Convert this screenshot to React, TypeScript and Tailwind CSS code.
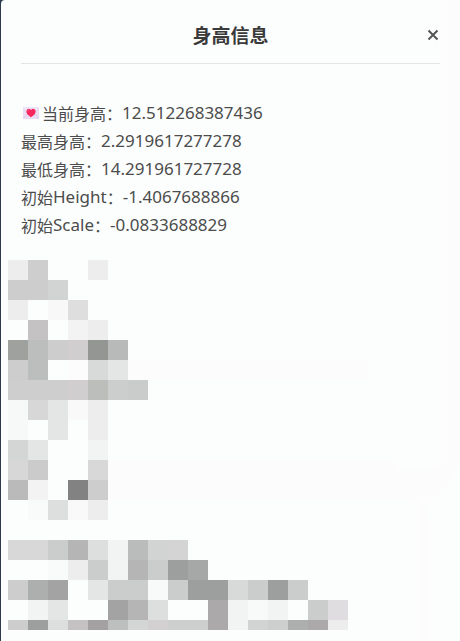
type Reading = { label: string; latin?: string; value: string; icon?: boolean };

const readings: Reading[] = [
  { label: "当前身高", value: "12.512268387436", icon: true },
  { label: "最高身高", value: "2.2919617277278" },
  { label: "最低身高", value: "14.291961727728" },
  { label: "初始", latin: "Height", value: "-1.4067688866" },
  { label: "初始", latin: "Scale", value: "-0.0833688829" },
];

// Each row lists its cell colours from left to right; a dot is an empty cell.
const upperRows = [
  "ecedec cdcecd . . ecedec",
  "cccdcc cccdcc d2d4d3",
  "ecedec . f7f8f7 dddedd",
  ". c4c2c3 . f2f3f2 ecedec",
  "9fa19f bcbebd cccdcc d0cecf 949694 b8bab9",
  "cccdcc bcbebd . fdfcfd d8dad9 e4e6e5",
  "cdcecd cdcecd cdcecd d0cecf bcbebc cccecd cacccb",
  "f7f9f8 d8d7d8 e4e6e5 f8f9f8 ecedec",
  "f7f9f8 . e4e6e5 . ecedec",
  "d4d6d5 e4e6e5 . . f2f4f3",
  "d8d7d8 cbcbcb . . d8d8d8",
  "bababa f3f3f3 . 828282 cdcdcd",
  ". f9fbfa dddfde f8f9f8 ecedec",
];

const lowerRows = [
  "d8d8d8 d8d8d8 cbcdcc b5b5b5 dddfde f2f4f3 babcbb d2d4d3 d4d4d4",
  ". . f9fbfa ecedec cbcdcc f2f4f3 b5b5b5 cbcdcc 9d9f9e a6a8a7",
  "cdcdcd adafae a3a3a3 . e4e6e5 cbcdcc cbcdcc f8faf9 cbcdcc 9d9f9e 9d9f9e d8dad9 cbcdcc 9d9f9e cbcdcc",
  ". f2f4f3 e4e6e5 . . a3a3a3 b5b5b5 dddfde . . aba9aa f2f4f3 f8faf9 f2f4f3 . cbcdcc dfdddf",
  "cdcdcd 9d9f9e dddfde c4c2c3 a3a1a2 bdbfbe d4d6d5 d2d0d1 cdcfce cdcfce aba9aa f2f4f3 d2d4d3 cdcfce adafae aba9aa ecedec",
];

function Mosaic({ rows, shortLast = false }: { rows: string[]; shortLast?: boolean }) {
  return (
    <div aria-hidden="true">
      {rows.map((row, r) => (
        <div key={r} className={shortLast && r === rows.length - 1 ? "flex h-2.5" : "flex h-5"}>
          {row.split(" ").map((c, i) => (
            <div
              key={i}
              className="w-5 shrink-0"
              style={{ backgroundColor: c === "." ? "transparent" : `#${c}` }}
            />
          ))}
        </div>
      ))}
    </div>
  );
}

function LoveLetter() {
  return (
    <svg width="16" height="12" viewBox="0 0 16 12" className="mr-[3px] ml-0.5 inline-block" aria-hidden="true">
      <rect width="16" height="12" rx="1" fill="#e9dcf3" />
      <path d="M0 0H16L8 8Z" fill="#eee6f8" />
      <path d="M0 11.5 5 7M16 11.5 11 7" stroke="#d9c7e8" strokeWidth=".7" />
      <path d="M8 10.2C5 8.2 3.4 6.5 3.4 4.4C3.4 1.6 6.6 1 8 2.9C9.4 1 12.6 1.6 12.6 4.4C12.6 6.5 11 8.2 8 10.2Z" fill="#f8285f" />
      <path d="M4.7 4.2Q5 3 6.2 2.9" stroke="#ff6b91" strokeWidth=".8" fill="none" />
    </svg>
  );
}

// Very faint outline of the cards that lie under the translucent sheet.
function Undertone() {
  return (
    <svg
      className="pointer-events-none absolute top-0 right-0"
      width="459"
      height="641"
      viewBox="0 0 459 641"
      fill="#fdfcfd"
      aria-hidden="true"
    >
      <path d="M440 0H459V465Q445 495 425 503H418Q410 500 396 500H107V460H396V470H425Q440 470 440 455Z" />
      <path d="M418 503H425Q429 520 429 545V641H418Z" />
      <path d="M127 360H367V380H127Z" />
    </svg>
  );
}

export default function App() {
  return (
    <div className="min-h-screen bg-[#2d3a4b] pl-px font-['Noto_Sans','Noto_Sans_CJK_SC',sans-serif] text-[#4c4c4c]">
      <section
        aria-labelledby="dialog-title"
        className="relative isolate min-h-screen overflow-hidden rounded-tl bg-[#fcfefd]"
      >
        <div className="absolute inset-0 -z-10">
          <Undertone />
        </div>
        <header className="mx-5 grid h-16 grid-cols-[1fr_auto_1fr] items-center border-b border-[#e4e5e5] pt-1.5">
          <h1
            id="dialog-title"
            className="col-start-2 font-['Noto_Sans_CJK_SC',sans-serif] text-[19px] leading-7 font-bold text-[#3a3a3a]"
          >
            身高信息
          </h1>
          <button type="button" aria-label="关闭" className="mr-px justify-self-end text-[#555555]">
            <svg width="12" height="12" viewBox="0 0 12 12" fill="none" stroke="currentColor" strokeWidth="2">
              <path d="M1.5 1.5 10.5 10.5M10.5 1.5 1.5 10.5" />
            </svg>
          </button>
        </header>

        <div className="px-5 pt-[35px]">
          {readings.map((item) => (
            <p key={item.label + item.value} className="flex h-7 items-center leading-7 whitespace-nowrap">
              {item.icon && <LoveLetter />}
              <span className="font-['Noto_Sans_CJK_SC',sans-serif] text-base leading-7">{item.label}</span>
              {item.latin && <span className="text-[17px] leading-7">{item.latin}</span>}
              <span className="font-['Noto_Sans_CJK_SC',sans-serif] text-base leading-7">：</span>
              <span className="text-[17px] leading-7">{item.value}</span>
            </p>
          ))}
        </div>

        <div className="flex flex-col gap-5 overflow-hidden pt-[21px] pb-2.5 pl-[7px]">
          <Mosaic rows={upperRows} />
          <Mosaic rows={lowerRows} shortLast />
        </div>
      </section>
    </div>
  );
}
